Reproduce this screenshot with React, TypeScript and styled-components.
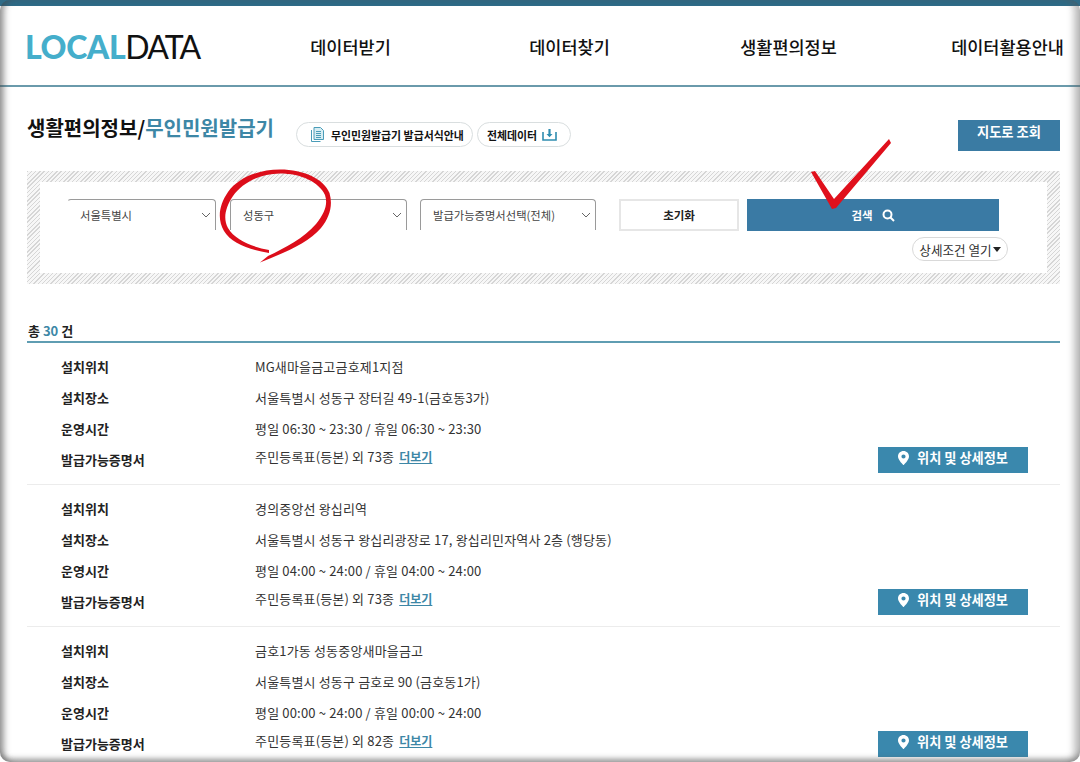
import React from "react";
import styled, { createGlobalStyle } from "styled-components";

const Global = createGlobalStyle`
  html, body { margin: 0; padding: 0; background: #fff; }
  body { font-family: "Noto Sans CJK KR", "Noto Sans", sans-serif; color: #222; }
  * { box-sizing: border-box; }
`;

const Page = styled.div`
  position: relative;
  width: 1080px;
  height: 762px;
  overflow: hidden;
  background: #fff;
`;
const TopBar = styled.div`
  height: 6px;
  background: #2f6b87;
`;
const Header = styled.header`
  height: 81px;
  display: flex;
  align-items: center;
  padding: 1px 0 0 25px;
  border-bottom: 2px solid #6a9aab;
`;
const Logo = styled.div`
  width: 216px;
  flex: none;
  font-family: "Lato", "Noto Sans", sans-serif;
  font-size: 32px;
  line-height: 1;
  letter-spacing: -1.8px;
  color: #111;
  font-weight: 400;
  margin-top: 2px;
  white-space: nowrap;
`;
const LogoStrong = styled.span`
  color: #45aecb;
  font-weight: 900;
  letter-spacing: -0.4px;
`;
const Nav = styled.nav`
  display: grid;
  grid-template-columns: repeat(4, 219px);
  flex: none;
`;
const NavItem = styled.div`
  text-align: center;
  font-size: 17.5px;
  font-weight: 500;
  color: #111;
  white-space: nowrap;
`;
const Main = styled.main`
  padding: 0 20px 0 27px;
`;
const TitleRow = styled.div`
  height: 84px;
  padding-top: 33px;
  display: flex;
  align-items: flex-start;
`;
const Title = styled.h1`
  margin: 0;
  width: 269px;
  flex: none;
  font-size: 20px;
  line-height: 16px;
  font-weight: 700;
  color: #111;
  white-space: nowrap;
`;
const TitleAccent = styled.span`
  color: #3d87a6;
`;
const Pill = styled.div<{ $w: number; $pad: number; $gap: number }>`
  width: ${(p) => p.$w}px;
  height: 25px;
  margin: 2px 4px 0 0;
  padding-left: ${(p) => p.$pad}px;
  border: 1px solid #d9dedf;
  border-radius: 13px;
  display: flex;
  align-items: center;
  gap: ${(p) => p.$gap}px;
  font-size: 10.9px;
  font-weight: 700;
  color: #111;
  white-space: nowrap;
  flex: none;
`;
const MapButton = styled.div`
  margin-left: auto;
  width: 102px;
  height: 31px;
  background: #3a7ba3;
  color: #fff;
  font-size: 13.3px;
  font-weight: 700;
  display: flex;
  align-items: center;
  justify-content: center;
  padding-bottom: 8px;
`;
const SearchBox = styled.section`
  height: 113px;
  padding: 11px 13px;
  background: repeating-linear-gradient(135deg, #d6d6d6 0 1px, #f7f7f7 1px 3px);
`;
const SearchInner = styled.div`
  height: 91px;
  background: #fff;
  padding: 17px 39px 0 27px;
`;
const Controls = styled.div`
  display: flex;
  align-items: flex-start;
`;
const Select = styled.div<{ $w: number; $gap: number; $open?: boolean }>`
  width: ${(p) => p.$w}px;
  height: 31px;
  margin-left: ${(p) => p.$gap}px;
  border: 1px solid #9a9a9a;
  border-bottom: 0;
  border-left-color: ${(p) => (p.$open ? "transparent" : "#9a9a9a")};
  border-radius: 4px 4px 0 0;
  display: flex;
  align-items: center;
  justify-content: space-between;
  padding: 0 4px 1px 12px;
  font-size: 11.3px;
  color: #444;
  white-space: nowrap;
  flex: none;
`;
const ResetButton = styled.div`
  width: 120px;
  height: 32px;
  margin-left: 23px;
  border: 2px solid #e6e6e6;
  display: flex;
  align-items: center;
  justify-content: center;
  font-size: 11.5px;
  font-weight: 700;
  color: #222;
  flex: none;
`;
const SearchButton = styled.div`
  width: 252px;
  height: 32px;
  margin-left: 8px;
  background: #3a7aa4;
  color: #fff;
  display: flex;
  align-items: center;
  justify-content: center;
  gap: 9px;
  font-size: 11.5px;
  font-weight: 700;
  flex: none;
`;
const DetailRow = styled.div`
  display: flex;
  justify-content: flex-end;
  margin-top: 6px;
`;
const DetailButton = styled.div`
  width: 96px;
  height: 24px;
  border: 1px solid #d9d9d9;
  border-radius: 12px;
  display: flex;
  align-items: center;
  justify-content: center;
  gap: 1px;
  font-size: 12.6px;
  color: #333;
  white-space: nowrap;
`;
const Caret = styled.span`
  width: 0;
  height: 0;
  border-style: solid;
  border-width: 5px 4px 0;
  border-color: #222 transparent transparent;
`;
const Total = styled.div`
  margin-top: 39px;
  padding-left: 1px;
  height: 20px;
  border-bottom: 2px solid #5f9db2;
  font-size: 13px;
  line-height: 16px;
  font-weight: 700;
  color: #222;
`;
const TotalNum = styled.span`
  color: #3d87a6;
`;
const Block = styled.article`
  padding: 8px 32px 9px 34px;
  border-bottom: 1px solid #ececec;
`;
const Row = styled.div`
  height: 31px;
  display: flex;
  align-items: center;
`;
const Label = styled.div`
  width: 194px;
  flex: none;
  font-size: 13px;
  font-weight: 700;
  color: #222;
`;
const Value = styled.div<{ $raised?: boolean }>`
  font-size: 13px;
  color: #333;
  white-space: nowrap;
  letter-spacing: 0.17px;
  padding-bottom: ${(p) => (p.$raised ? 6 : 0)}px;
`;
const More = styled.span`
  margin-left: 5px;
  font-size: 12px;
  font-weight: 700;
  color: #3d87a6;
  text-decoration: underline;
  letter-spacing: 0;
`;
const LocationButton = styled.div`
  margin-left: auto;
  width: 150px;
  height: 26px;
  background: #3a88ad;
  color: #fff;
  display: flex;
  align-items: center;
  justify-content: center;
  gap: 8px;
  font-size: 13.2px;
  font-weight: 700;
  padding-bottom: 4px;
  flex: none;
`;
const Scribbles = styled.svg`
  position: absolute;
  left: 0;
  top: 0;
  width: 1080px;
  height: 762px;
  pointer-events: none;
`;
const Frame = styled.div`
  position: absolute;
  inset: 0;
  pointer-events: none;
  border-radius: 10px;
  box-shadow:
    inset 7px 0 6px -3px rgba(70, 70, 70, 0.55),
    inset -9px 0 7px -3px rgba(90, 90, 90, 0.4),
    inset 0 -6px 5px -2px rgba(90, 90, 90, 0.45);
`;

const Chevron = () => (
  <svg width="10" height="6" viewBox="0 0 10 6" fill="none" stroke="#666" strokeWidth="1">
    <path d="M1 1l4 4 4-4" />
  </svg>
);
const SearchIcon = () => (
  <svg width="13" height="13" viewBox="0 0 13 13" fill="none" stroke="#fff" strokeWidth="2">
    <circle cx="5.5" cy="5.5" r="4" />
    <path d="M8.5 8.5l3.5 3.5" />
  </svg>
);
const PinIcon = () => (
  <svg width="11" height="14" viewBox="0 0 11 14">
    <path
      fill="#fff"
      fillRule="evenodd"
      d="M5.5 0C2.4 0 0 2.4 0 5.4 0 9 5.5 14 5.5 14S11 9 11 5.4C11 2.4 8.6 0 5.5 0zm0 3.4a2.1 2.1 0 1 1 0 4.2 2.1 2.1 0 0 1 0-4.2z"
    />
  </svg>
);
const DocIcon = () => (
  <svg width="13" height="15" viewBox="0 0 13 15" fill="none" stroke="#4a9cb8" strokeWidth="1">
    <path d="M3 .5h6.5l3 3v9H3z" fill="#d6edf3" />
    <path d="M.5 3v11.5h9" />
    <path d="M5 4.5h5M5 6.5h5M5 8.5h5M5 10.5h5" />
  </svg>
);
const DownloadIcon = () => (
  <svg width="15" height="13" viewBox="0 0 15 13" fill="none" stroke="#2f8db0" strokeWidth="1.6">
    <path d="M1 4v8h13V4" />
    <path d="M7.5 1v7" strokeWidth="2.2" />
    <path d="M4.5 6l3 3.2 3-3.2z" fill="#2f8db0" stroke="none" />
  </svg>
);

const places = [
  {
    name: "MG새마을금고금호제1지점",
    addr: "서울특별시 성동구 장터길 49-1(금호동3가)",
    hours: "평일 06:30 ~ 23:30 / 휴일 06:30 ~ 23:30",
    docs: "주민등록표(등본) 외 73종",
  },
  {
    name: "경의중앙선 왕십리역",
    addr: "서울특별시 성동구 왕십리광장로 17, 왕십리민자역사 2층 (행당동)",
    hours: "평일 04:00 ~ 24:00 / 휴일 04:00 ~ 24:00",
    docs: "주민등록표(등본) 외 73종",
  },
  {
    name: "금호1가동 성동중앙새마을금고",
    addr: "서울특별시 성동구 금호로 90 (금호동1가)",
    hours: "평일 00:00 ~ 24:00 / 휴일 00:00 ~ 24:00",
    docs: "주민등록표(등본) 외 82종",
  },
];

export default function App() {
  return (
    <Page>
      <Global />
      <TopBar />
      <Header>
        <Logo>
          <LogoStrong>LOCAL</LogoStrong>DATA
        </Logo>
        <Nav>
          <NavItem>데이터받기</NavItem>
          <NavItem>데이터찾기</NavItem>
          <NavItem>생활편의정보</NavItem>
          <NavItem>데이터활용안내</NavItem>
        </Nav>
      </Header>
      <Main>
        <TitleRow>
          <Title>
            생활편의정보/<TitleAccent>무인민원발급기</TitleAccent>
          </Title>
          <Pill $w={177} $pad={14} $gap={7}>
            <DocIcon />
            무인민원발급기 발급서식안내
          </Pill>
          <Pill $w={94} $pad={9} $gap={5}>
            전체데이터
            <DownloadIcon />
          </Pill>
          <MapButton>지도로 조회</MapButton>
        </TitleRow>
        <SearchBox>
          <SearchInner>
            <Controls>
              <Select $w={149} $gap={0} $open>
                서울특별시
                <Chevron />
              </Select>
              <Select $w={177} $gap={14}>
                성동구
                <Chevron />
              </Select>
              <Select $w={176} $gap={13}>
                발급가능증명서선택(전체)
                <Chevron />
              </Select>
              <ResetButton>초기화</ResetButton>
              <SearchButton>
                검색
                <SearchIcon />
              </SearchButton>
            </Controls>
            <DetailRow>
              <DetailButton>
                상세조건 열기
                <Caret />
              </DetailButton>
            </DetailRow>
          </SearchInner>
        </SearchBox>
        <Total>
          총 <TotalNum>30</TotalNum> 건
        </Total>
        {places.map((p) => (
          <Block key={p.name}>
            <Row>
              <Label>설치위치</Label>
              <Value>{p.name}</Value>
            </Row>
            <Row>
              <Label>설치장소</Label>
              <Value>{p.addr}</Value>
            </Row>
            <Row>
              <Label>운영시간</Label>
              <Value>{p.hours}</Value>
            </Row>
            <Row>
              <Label>발급가능증명서</Label>
              <Value $raised>
                {p.docs}
                <More>더보기</More>
              </Value>
              <LocationButton>
                <PinIcon />
                위치 및 상세정보
              </LocationButton>
            </Row>
          </Block>
        ))}
      </Main>
      <Scribbles viewBox="0 0 1080 762">
        <path
          d="M269 253C250 250 231 243 224 231C217 219 219 205 228 192C238 178 258 169.5 280 169.5C304 169.5 324 179 329.5 193C333 205 330 217 321 228C308 243 286 252 260 262.5L268 256C285 248 304 238 316 224C325 213 328 204 325 195C319 182 301 173.5 280 173.5C260 173.5 242 183 233 196C225 208 223 219 228 228C235 240 252 247 269 250Z"
          fill="#dc0d1a"
        />
        <path d="M811 172l4-1 19 28 55-60 2 4-55 65-4 1z" fill="#e0101c" />
      </Scribbles>
      <Frame />
    </Page>
  );
}
